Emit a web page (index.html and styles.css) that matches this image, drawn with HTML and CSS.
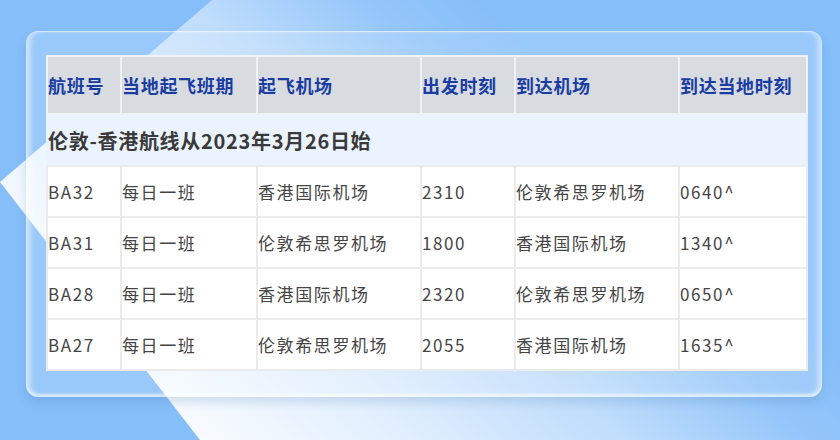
FILE: index.html
```html
<!DOCTYPE html>
<html lang="zh-CN">
<head>
<meta charset="utf-8">
<title>航班时刻表</title>
<link rel="stylesheet" href="styles.css">
</head>
<body>
<div class="card">
  <table class="flights">
    <colgroup>
      <col class="c1"><col class="c2"><col class="c3"><col class="c4"><col class="c5"><col class="c6">
    </colgroup>
    <thead>
      <tr>
        <th>航班号</th>
        <th>当地起飞班期</th>
        <th>起飞机场</th>
        <th>出发时刻</th>
        <th>到达机场</th>
        <th>到达当地时刻</th>
      </tr>
    </thead>
    <tbody>
      <tr class="route"><td colspan="6">伦敦-香港航线从2023年3月26日始</td></tr>
      <tr><td>BA32</td><td>每日一班</td><td>香港国际机场</td><td>2310</td><td>伦敦希思罗机场</td><td>0640^</td></tr>
      <tr><td>BA31</td><td>每日一班</td><td>伦敦希思罗机场</td><td>1800</td><td>香港国际机场</td><td>1340^</td></tr>
      <tr><td>BA28</td><td>每日一班</td><td>香港国际机场</td><td>2320</td><td>伦敦希思罗机场</td><td>0650^</td></tr>
      <tr><td>BA27</td><td>每日一班</td><td>伦敦希思罗机场</td><td>2055</td><td>香港国际机场</td><td>1635^</td></tr>
    </tbody>
  </table>
</div>
</body>
</html>
```

FILE: styles.css
```css
html, body {
  margin: 0;
  width: 840px;
  height: 440px;
  overflow: hidden;
}
body {
  position: relative;
  box-sizing: border-box;
  padding: 31px 18px 0 26px;
  background: #86bef9;
  font-family: "Noto Sans CJK SC", "Noto Sans", sans-serif;
}
body::before {
  content: "";
  position: absolute;
  inset: 0;
  clip-path: polygon(0 182px, 212px 0, 100% 0, 100% 100%, 200px 100%);
  background: linear-gradient(45deg,
    rgba(255,255,255,0.96) 14%,
    rgba(255,255,255,0.75) 32%,
    rgba(255,255,255,0.45) 50%,
    rgba(255,255,255,0.12) 63%,
    rgba(255,255,255,0) 72%);
  z-index: 0;
}
.card {
  position: relative;
  z-index: 1;
  box-sizing: border-box;
  width: 796px;
  height: 366px;
  padding: 24px 16px 0 20px;
  border-radius: 12px;
  background: rgba(255,255,255,0.16);
  border: 1px solid rgba(255,255,255,0.55);
  box-shadow:
    inset 6px 0 5px -2px rgba(255,255,255,0.45),
    inset -6px 0 5px -2px rgba(255,255,255,0.4),
    inset 0 -3px 3px -1px rgba(255,255,255,0.6),
    0 6px 10px rgba(60,110,170,0.18);
}
.flights {
  width: 760px;
  table-layout: fixed;
  border-collapse: collapse;
  margin: -1px 0 0 -1px;
}
.c1 { width: 74px; }
.c2 { width: 136px; }
.c3 { width: 164px; }
.c4 { width: 94px; }
.c5 { width: 164px; }
.c6 { width: 128px; }
.flights th {
  height: 58px;
  padding: 0;
  text-align: left;
  background: #d8dce1;
  border: 2px solid #eef1f5;
  color: #1a3da3;
  font-size: 18px;
  font-weight: 700;
  letter-spacing: 0.7px;
  box-sizing: border-box;
}
.flights td {
  height: 51px;
  padding: 0;
  background: #ffffff;
  border: 2px solid #ebebeb;
  color: #454545;
  font-size: 17px;
  letter-spacing: 1.6px;
  box-sizing: border-box;
  white-space: nowrap;
}
.flights tr.route td {
  height: 52px;
  background: #eaf3fe;
  border-color: #eaf3fe #ebebeb #ebebeb #eaf3fe;
  color: #3a3a3a;
  font-size: 20px;
  font-weight: 700;
  letter-spacing: 0.7px;
}
```
